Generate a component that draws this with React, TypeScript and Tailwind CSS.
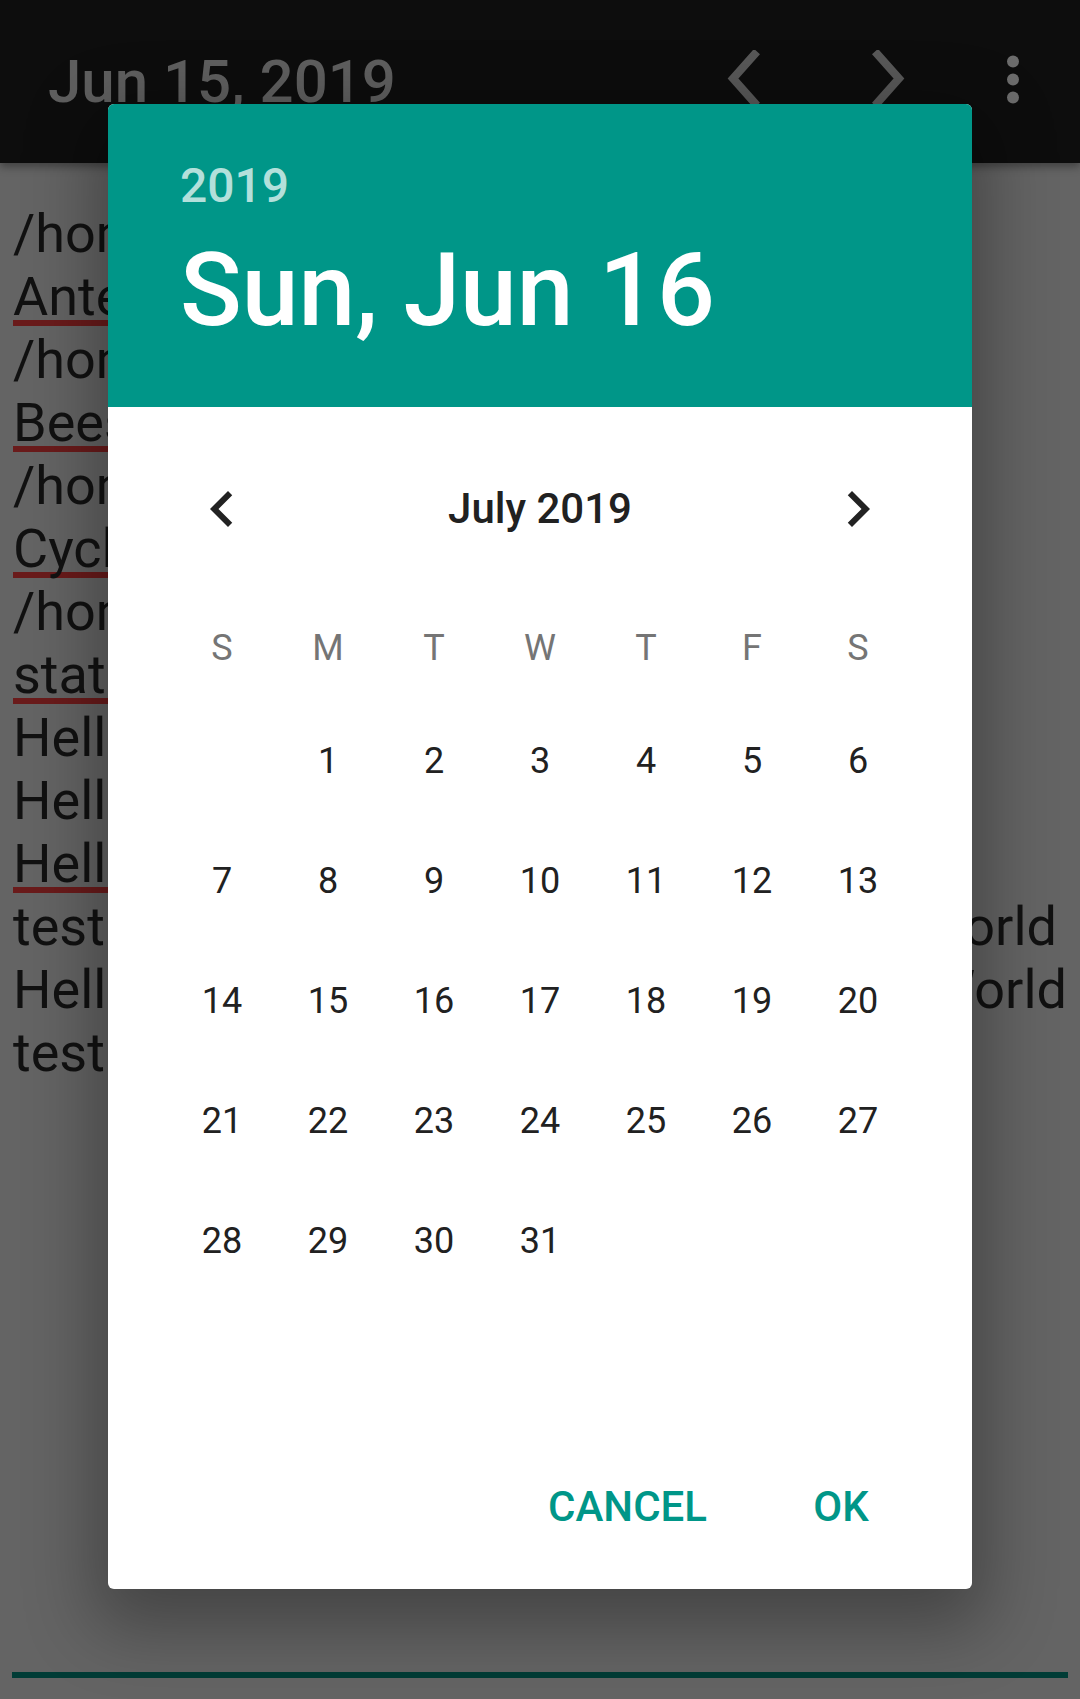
import React from 'react';

type NoteLine = {
  text: string;
  right?: string;
  rightPad?: string;
  misspelled?: boolean;
};

// what sits behind the scrim
const noteLines: NoteLine[] = [
  { text: '/home/user/Documents/notes' },
  { text: 'Antenna design sketches', misspelled: true },
  { text: '/home/user/Documents/music' },
  { text: 'Beeswax candle recipe', misspelled: true },
  { text: '/home/user/Documents/sport' },
  { text: 'Cycling log summer', misspelled: true },
  { text: '/home/user/Documents/tmp' },
  { text: 'stationery order', misspelled: true },
  { text: 'Hello there' },
  { text: 'Hello again' },
  { text: 'Hellooo everyone', misspelled: true },
  { text: 'test', right: 'World', rightPad: 'pr-[23px]' },
  { text: 'Hello', right: 'World', rightPad: 'pr-[13px]' },
  { text: 'test' },
];

const weekDays = ['S', 'M', 'T', 'W', 'T', 'F', 'S'];

// July 2019 starts on a Monday
const julyCells: (number | null)[] = [null, ...Array.from({ length: 31 }, (_, i) => i + 1)];

const Toolbar = () => (
  <div className="relative z-10 flex h-[163px] shrink-0 items-center bg-[#0d0d0d] shadow-[0_4px_8px_rgba(0,0,0,0.35)]">
    <div className="pl-[48px] text-[60px] font-medium leading-none text-[#5f5f5f]">Jun 15, 2019</div>
    <div className="ml-auto flex items-center pr-[43px]">
      <svg width="48" height="64" viewBox="0 0 48 64" className="block">
        <polyline points="37,1.5 13,28.5 37,55.5" fill="none" stroke="#585858" strokeWidth="8" />
      </svg>
      <svg width="48" height="64" viewBox="0 0 48 64" className="ml-[96px] block">
        <polyline points="11,1.5 35,28.5 11,55.5" fill="none" stroke="#585858" strokeWidth="8" />
      </svg>
      <svg width="48" height="64" viewBox="0 0 48 64" className="ml-[77px] block">
        <circle cx="24" cy="11.5" r="6" fill="#6c6c6c" />
        <circle cx="24" cy="29.5" r="6" fill="#6c6c6c" />
        <circle cx="24" cy="47.5" r="6" fill="#6c6c6c" />
      </svg>
    </div>
  </div>
);

const Notes = () => (
  <div className="flex-1 pt-[39px] pl-[13px] text-[54px] leading-[63px] text-[#111111] whitespace-nowrap">
    {noteLines.map((line, i) => (
      <div key={i} className={line.right ? `flex justify-between ${line.rightPad}` : ''}>
        <span
          className={
            line.misspelled
              ? 'underline decoration-[#6a1b1b] [text-decoration-thickness:6px] [text-underline-offset:5px] [text-decoration-skip-ink:none]'
              : ''
          }
        >
          {line.text}
        </span>
        {line.right && <span>{line.right}</span>}
      </div>
    ))}
  </div>
);

const ChevronLeft = () => (
  <svg width="72" height="72" viewBox="0 0 24 24" className="block">
    <path d="M15.41 7.41L14 6l-6 6 6 6 1.41-1.41L10.83 12z" fill="#222222" />
  </svg>
);

const ChevronRight = () => (
  <svg width="72" height="72" viewBox="0 0 24 24" className="block">
    <path d="M10 6L8.59 7.41 13.17 12l-4.58 4.59L10 18l6-6z" fill="#222222" />
  </svg>
);

const DatePickerDialog = () => (
  <div className="flex h-[1485px] w-[864px] flex-col overflow-hidden rounded-[6px] bg-white shadow-[0_24px_70px_14px_rgba(0,0,0,0.32)]">
    {/* header */}
    <div className="h-[303px] shrink-0 bg-[#009688] pl-[72px] pt-[58px]">
      <div className="text-[48px] font-medium leading-none text-[#b3e0db]">2019</div>
      <div className="mt-[29px] text-[102px] font-medium leading-none text-white">Sun, Jun 16</div>
    </div>

    {/* calendar */}
    <div className="flex flex-1 flex-col pt-[66px]">
      <div className="mx-auto flex h-[72px] w-[742px] items-center justify-between px-[17px]">
        <ChevronLeft />
        <div className="text-[42px] font-medium leading-none text-[#212121]">July 2019</div>
        <ChevronRight />
      </div>

      <div className="mx-auto mt-[50px] grid h-[106px] w-[742px] grid-cols-7 items-center">
        {weekDays.map((d, i) => (
          <div key={i} className="text-center text-[36px] leading-none text-[#757575]">
            {d}
          </div>
        ))}
      </div>

      <div className="mx-auto grid w-[742px] grid-cols-7">
        {julyCells.map((day, i) => (
          <div key={i} className="flex h-[120px] items-center justify-center text-[36px] leading-none text-[#212121]">
            {day ?? ''}
          </div>
        ))}
      </div>

      <div className="flex-1" />

      <div className="mb-[28px] flex h-[108px] items-center justify-end gap-[14px] pr-[35px]">
        <button className="px-[24px] text-[42px] font-medium leading-none text-[#009688]">CANCEL</button>
        <button className="w-[192px] text-center text-[42px] font-medium leading-none text-[#009688]">OK</button>
      </div>
    </div>
  </div>
);

export default function App() {
  return (
    <div className="relative h-[1699px] w-[1080px] overflow-hidden bg-[#646464] font-['Roboto','Noto_Sans',sans-serif]">
      <div className="flex h-full flex-col">
        <Toolbar />
        <Notes />
        <div className="mx-[12px] mb-[21px] h-[6px] shrink-0 bg-[#003c36]" />
      </div>

      {/* modal layer */}
      <div className="absolute inset-0 z-20 flex justify-center pt-[104px]">
        <DatePickerDialog />
      </div>
    </div>
  );
}
